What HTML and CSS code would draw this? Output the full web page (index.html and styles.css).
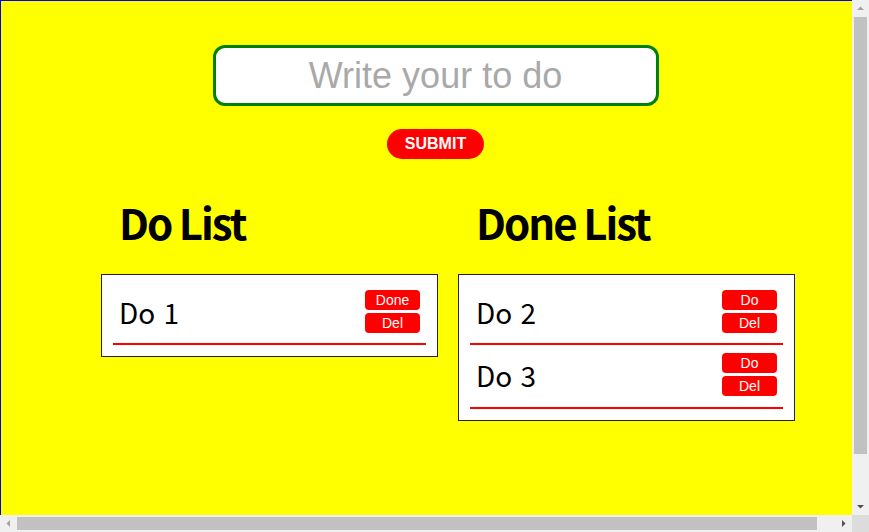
FILE: index.html
```html
<!DOCTYPE html>
<html lang="en">
<head>
<meta charset="utf-8">
<title>To Do</title>
<link rel="stylesheet" href="styles.css">
</head>
<body>
<div class="app">
  <form class="add-form">
    <input class="todo-input" type="text" placeholder="Write your to do">
    <button class="submit" type="button">SUBMIT</button>
  </form>
  <div class="lists">
    <section class="col">
      <h2 class="list-title">Do List</h2>
      <ul class="list">
        <li class="item">
          <span class="item-text">Do 1</span>
          <div class="actions"><button class="act" type="button">Done</button><button class="act" type="button">Del</button></div>
        </li>
      </ul>
    </section>
    <section class="col">
      <h2 class="list-title">Done List</h2>
      <ul class="list">
        <li class="item">
          <span class="item-text">Do 2</span>
          <div class="actions"><button class="act" type="button">Do</button><button class="act" type="button">Del</button></div>
        </li>
        <li class="item">
          <span class="item-text">Do 3</span>
          <div class="actions"><button class="act" type="button">Do</button><button class="act" type="button">Del</button></div>
        </li>
      </ul>
    </section>
  </div>
</div>
<div class="sb sb-v" aria-hidden="true">
  <svg class="sb-arrow" width="17" height="17" viewBox="0 0 17 17"><polygon points="5,10 12,10 8.5,6.5" fill="#a3a3a3"/></svg>
  <div class="sb-track-v"><div class="sb-thumb-v"></div></div>
  <svg class="sb-arrow" width="17" height="17" viewBox="0 0 17 17"><polygon points="5,7 12,7 8.5,10.5" fill="#505050"/></svg>
</div>
<div class="sb sb-h" aria-hidden="true">
  <svg class="sb-arrow" width="17" height="17" viewBox="0 0 17 17"><polygon points="10,5 10,12 6.5,8.5" fill="#a3a3a3"/></svg>
  <div class="sb-track-h"><div class="sb-thumb-h"></div></div>
  <svg class="sb-arrow" width="17" height="17" viewBox="0 0 17 17"><polygon points="7,5 7,12 10.5,8.5" fill="#505050"/></svg>
</div>
<div class="sb sb-corner" aria-hidden="true"></div>
</body>
</html>
```
FILE: styles.css
```css
html, body {
  margin: 0;
  padding: 0;
}
body {
  background: #ffff00;
}
.app {
  width: 100vw;
  min-height: 565px;
  border: 1px solid #0000ff;
  background: #ffff00;
  font-family: "Noto Sans CJK KR", "Noto Sans", sans-serif;
}
.add-form {
  display: flex;
  flex-direction: column;
  align-items: center;
  padding-top: 44px;
  margin: 0;
}
.todo-input {
  box-sizing: border-box;
  width: 446px;
  height: 61px;
  border: 3px solid #008000;
  border-radius: 12px;
  padding: 0;
  background: #fff;
  font-family: "Liberation Sans", Arial, sans-serif;
  font-size: 36px;
  text-align: center;
  outline: none;
}
.todo-input::placeholder {
  color: #a9a9a9;
}
.submit {
  margin-top: 23px;
  width: 97px;
  height: 30px;
  border: 0;
  border-radius: 15px;
  padding: 0;
  background: #ff0000;
  color: #fff;
  font-family: "Liberation Sans", Arial, sans-serif;
  font-weight: 700;
  font-size: 16px;
}
.lists {
  display: flex;
  gap: 20px;
  padding-left: 100px;
  margin-top: 40px;
}
.col {
  width: 337px;
}
.list-title {
  margin: 0 0 30px;
  padding-left: 18px;
  font-size: 42px;
  line-height: 45px;
  letter-spacing: -2px;
  font-weight: 700;
  color: #000;
}
.list {
  list-style: none;
  margin: 0;
  padding: 7px 11px 11px 11px;
  background: #fff;
  border: 1px solid #222;
}
.item {
  display: flex;
  justify-content: space-between;
  align-items: center;
  padding: 8px 6px 10px;
  border-bottom: 2px solid #ff0000;
}
.item + .item {
  padding-bottom: 11px;
}
.item-text {
  font-size: 28px;
  line-height: 28px;
  word-spacing: 2px;
  color: #000;
}
.actions {
  display: flex;
  flex-direction: column;
  gap: 3px;
}
.act {
  width: 55px;
  height: 20px;
  border: 0;
  border-radius: 4px;
  padding: 0;
  background: #ff0000;
  color: #fff;
  font-family: "Liberation Sans", Arial, sans-serif;
  font-size: 14px;
}

/* decorative window scrollbars overlaying the page edges */
.sb {
  position: fixed;
  background: #f0f0f0;
  display: flex;
}
.sb-v {
  top: 0;
  right: 0;
  width: 17px;
  bottom: 17px;
  flex-direction: column;
}
.sb-h {
  left: 0;
  bottom: 0;
  right: 17px;
  height: 17px;
  flex-direction: row;
}
.sb-corner {
  right: 0;
  bottom: 0;
  width: 17px;
  height: 17px;
  background: #dcdcdc;
}
.sb-arrow {
  flex: none;
  display: block;
}
.sb-track-v {
  flex: 1;
  display: flex;
  flex-direction: column;
  padding: 0 2px;
}
.sb-thumb-v {
  height: 437px;
  background: #c1c1c1;
}
.sb-track-h {
  flex: 1;
  display: flex;
  padding: 2px 0;
}
.sb-thumb-h {
  width: 800px;
  background: #c1c1c1;
}
```
